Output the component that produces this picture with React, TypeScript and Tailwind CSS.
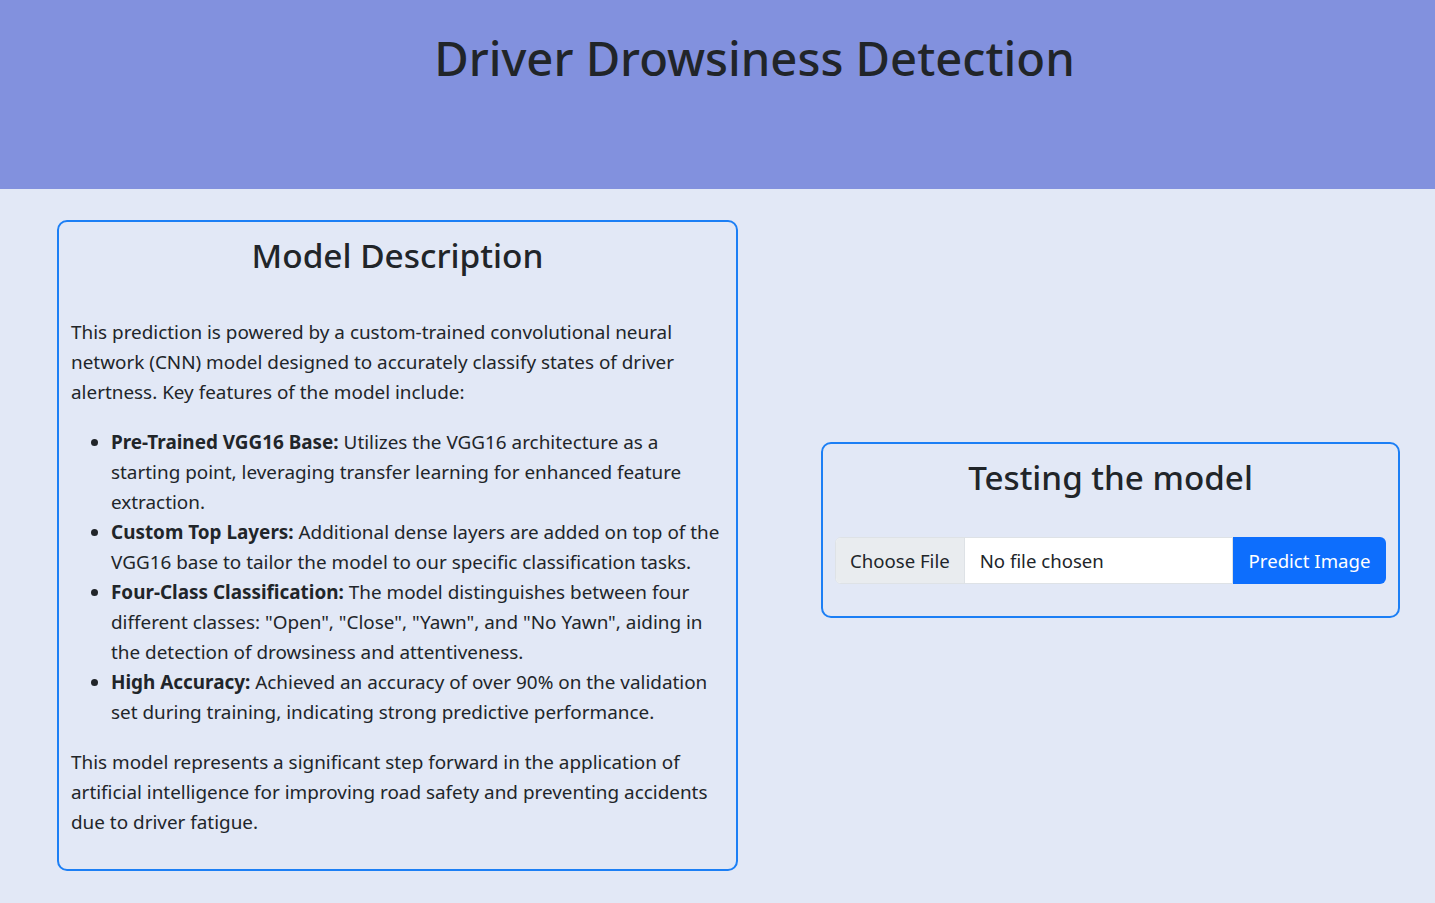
import React from "react";

const font = { fontFamily: '"Noto Sans", "Open Sans", sans-serif' };

export default function App() {
  return (
    <div className="min-h-[903px] bg-[#e2e8f6] text-[#212529]" style={font}>
      <header className="h-[189px] bg-[#8291de] pt-[30px] pl-[74px]">
        <h1 className="text-center text-[47.2px] leading-[1.2] font-medium">Driver Drowsiness Detection</h1>
      </header>
      <main className="flex items-start pt-[31px] pl-[57px]">
        <section className="w-[681px] shrink-0 rounded-[10px] border-2 border-[#1c7ff5] p-3 text-[18.9px] leading-[30px]">
          <h2 className="mb-[40px] text-center text-[33.4px] leading-[43px] font-medium">Model Description</h2>
          <p className="mb-5">
            This prediction is powered by a custom-trained convolutional neural network (CNN) model designed to
            accurately classify states of driver alertness. Key features of the model include:
          </p>
          <ul className="mb-5 list-disc pl-10">
            <li>
              <strong className="font-bold">Pre-Trained VGG16 Base:</strong> Utilizes the VGG16 architecture as a
              starting point, leveraging transfer learning for enhanced feature extraction.
            </li>
            <li>
              <strong className="font-bold">Custom Top Layers:</strong> Additional dense layers are added on top of the
              VGG16 base to tailor the model to our specific classification tasks.
            </li>
            <li>
              <strong className="font-bold">Four-Class Classification:</strong> The model distinguishes between four
              different classes: "Open", "Close", "Yawn", and "No Yawn", aiding in the detection of drowsiness and
              attentiveness.
            </li>
            <li>
              <strong className="font-bold">High Accuracy:</strong> Achieved an accuracy of over 90% on the validation
              set during training, indicating strong predictive performance.
            </li>
          </ul>
          <p className="mb-5">
            This model represents a significant step forward in the application of artificial intelligence for
            improving road safety and preventing accidents due to driver fatigue.
          </p>
        </section>
        <section className="ml-[83px] mt-[222px] w-[579px] shrink-0 rounded-[10px] border-2 border-[#1c7ff5] p-3">
          <h2 className="mb-[38px] text-center text-[33.2px] leading-[43px] font-medium">Testing the model</h2>
          <div className="mb-5 flex h-[47px] text-[18.6px]">
            <div className="flex flex-1 overflow-hidden rounded-l-[6px] border border-[#dee2e6] bg-white">
              <span className="flex items-center border-r border-[#dee2e6] bg-[#e9ecef] px-[14px]">Choose File</span>
              <span className="flex items-center px-[15px]">No file chosen</span>
            </div>
            <button className="w-[153px] rounded-r-[6px] bg-[#0d6efd] text-white">Predict Image</button>
          </div>
        </section>
      </main>
    </div>
  );
}
